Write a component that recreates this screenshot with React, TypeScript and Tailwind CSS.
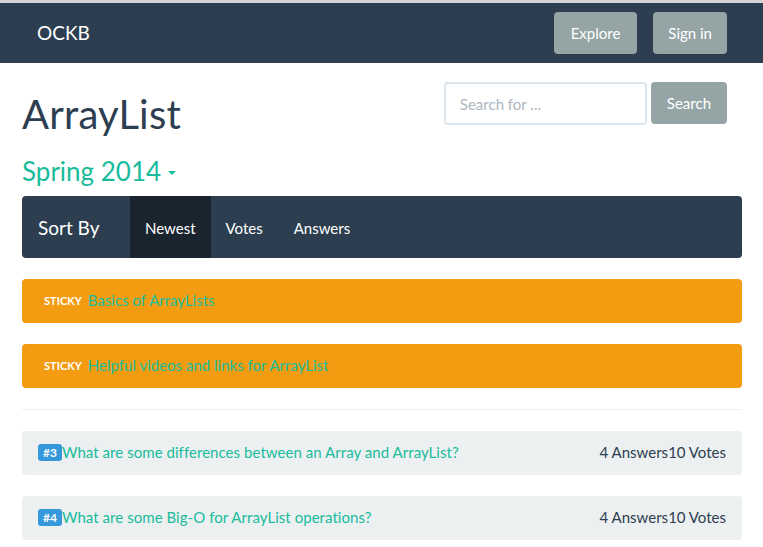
import * as React from "react";

const stickies = ["Basics of ArrayLists", "Helpful videos and links for ArrayList"];

const questions = [
  { id: 3, title: "What are some differences between an Array and ArrayList?", answers: 4, votes: 10 },
  { id: 4, title: "What are some Big-O for ArrayList operations?", answers: 4, votes: 10 },
];

export default function App() {
  return (
    <div className="min-h-screen bg-white text-[15px] text-[#2c3e50]" style={{ fontFamily: "Lato, 'Open Sans', sans-serif" }}>
      <div className="h-[3px] bg-[#d4d4d4]" />
      <nav className="flex h-[60px] items-center justify-between bg-[#2c3e50] pl-[37px] pr-[36px]">
        <span className="text-[19px] text-white">OCKB</span>
        <div className="flex gap-[16px]">
          <button className="h-[42px] rounded-[4px] bg-[#95a5a6] px-[17px] text-[15px] text-white">Explore</button>
          <button className="h-[42px] rounded-[4px] bg-[#95a5a6] px-[15px] text-[15px] text-white">Sign in</button>
        </div>
      </nav>

      <main className="px-[22px] pr-[21px]">
        <div className="flex items-start justify-between">
          <h1 className="mt-[29px] text-[40px] leading-[1.1] tracking-[0.2px]">ArrayList</h1>
          <div className="mt-[19px] mr-[15px] flex gap-[4px]">
            <input
              placeholder="Search for ..."
              className="h-[43px] w-[203px] rounded-[4px] border-2 border-[#dce4ec] px-[14px] text-[15px] outline-none placeholder:text-[#acb6c0]"
            />
            <button className="h-[42px] rounded-[4px] bg-[#95a5a6] px-[16px] text-[15px] text-white">Search</button>
          </div>
        </div>

        <div className="mt-[21px] flex items-center gap-[7px] text-[26px] leading-[1.1] text-[#18bc9c]">
          <span>Spring 2014</span>
          <span className="mt-[4px] h-0 w-0 border-x-[4px] border-t-[4px] border-x-transparent border-t-[#18bc9c]" />
        </div>

        <div className="mt-[10px] flex h-[62px] items-stretch overflow-hidden rounded-[4px] bg-[#2c3e50] text-white">
          <div className="flex w-[108px] items-center pl-[16px] pt-[3px] text-[19px]">Sort By</div>
          <div className="flex items-center bg-[#1a242f] px-[15px] pt-[3px]">Newest</div>
          <div className="flex items-center px-[15px] pt-[3px]">Votes</div>
          <div className="flex items-center px-[16px] pt-[3px]">Answers</div>
        </div>

        <div className="mt-[21px] flex flex-col gap-[21px]">
          {stickies.map((s) => (
            <div key={s} className="flex h-[44px] items-center gap-[6px] rounded-[4px] bg-[#f39c12] pl-[22px]">
              <span className="mt-[1px] text-[11px] font-bold text-white">STICKY</span>
              <a className="text-[15px] text-[#18bc9c]">{s}</a>
            </div>
          ))}
        </div>

        <hr className="mt-[21px] border-t border-[#ecf0f1]" />

        <div className="mt-[21px] flex flex-col gap-[21px]">
          {questions.map((q) => (
            <div key={q.id} className="flex h-[44px] items-center justify-between rounded-[4px] bg-[#ecf0f1] pl-[16px] pr-[16px]">
              <div className="flex items-center">
                <span className="rounded-[3px] bg-[#3498db] px-[5px] py-[1px] text-[12px] font-bold leading-[15px] text-white">#{q.id}</span>
                <a className="text-[15px] tracking-[0.05px] text-[#18bc9c]">{q.title}</a>
              </div>
              <div className="text-[15px]">
                <span>{q.answers} Answers</span>
                <span>{q.votes} Votes</span>
              </div>
            </div>
          ))}
        </div>
      </main>
    </div>
  );
}
